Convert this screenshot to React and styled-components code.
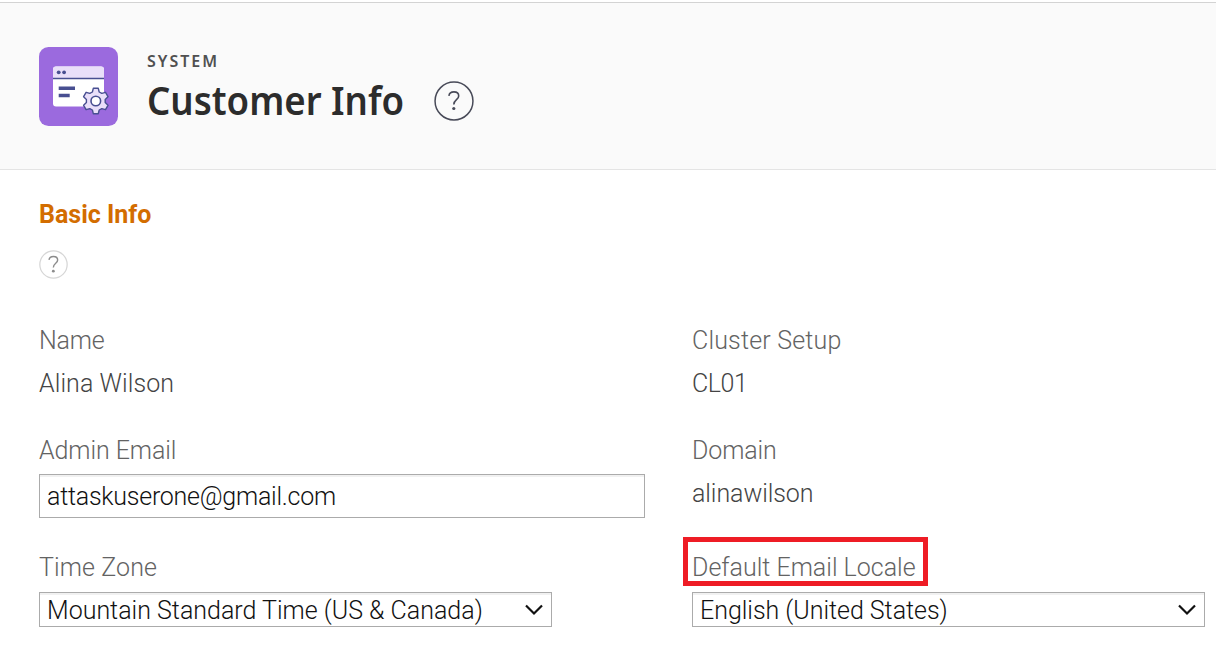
import React from "react";
import styled, { createGlobalStyle } from "styled-components";

const GlobalStyle = createGlobalStyle`
  *, *::before, *::after { box-sizing: border-box; }
  body {
    margin: 0;
    background: #ffffff;
    font-family: Roboto, "Liberation Sans", sans-serif;
    font-size: 25px;
    line-height: 30px;
    color: #484848;
  }
`;

const Page = styled.div`
  width: 100%;
  height: 647px;
  padding-top: 2px;
  overflow: hidden;
`;

const Header = styled.header`
  height: 168px;
  padding: 44px 39px 0;
  display: flex;
  background: #fafafa;
  border-top: 1px solid #d3d3d3;
  border-bottom: 1px solid #e4e4e4;
`;

const AppIcon = styled.svg`
  width: 79px;
  height: 79px;
  flex: none;
`;

const Heading = styled.div`
  margin-left: 29px;
  font-family: "Noto Sans", "Open Sans", sans-serif;
`;

const Eyebrow = styled.div`
  height: 20px;
  margin-top: 4px;
  font-size: 16px;
  line-height: 20px;
  font-weight: 600;
  letter-spacing: 2px;
  color: #505050;
`;

const TitleRow = styled.div`
  height: 56px;
  margin-top: 1px;
  display: flex;
  align-items: center;
  gap: 31px;
`;

const Title = styled.h1`
  margin: 0;
  width: 256px;
  white-space: nowrap;
  font-size: 39px;
  line-height: 56px;
  font-weight: 600;
  transform: scaleX(0.938);
  transform-origin: left center;
  color: #2c2c2c;
`;

const HelpIcon = styled.svg`
  display: block;
  width: ${(p) => p.$size}px;
  height: ${(p) => p.$size}px;
  margin-top: ${(p) => p.$top || 0}px;
`;

const Content = styled.main`
  padding: 29px 11px 0 39px;
`;

const SectionTitle = styled.h2`
  margin: 0 0 20px;
  padding-top: 1px;
  font-size: 25px;
  line-height: 30px;
  font-weight: 700;
  color: #d36d00;
`;

const Form = styled.div`
  margin-top: 47px;
  display: grid;
  grid-template-columns: 606px 513px;
  column-gap: 47px;
  grid-template-rows: 110px 117px 76px;
`;

const Field = styled.div`
  display: flex;
  flex-direction: column;
  align-items: flex-start;
`;

const Text = styled.span`
  white-space: nowrap;
  font-weight: 350;
  letter-spacing: ${(p) => p.$spacing || 0}px;
`;

const Label = styled(Text)`
  color: #636363;
`;

const Value = styled(Text)`
  margin-top: 13px;
  color: #444444;
`;

const Control = styled.div`
  width: ${(p) => p.$width}px;
  height: ${(p) => p.$height}px;
  margin-top: ${(p) => p.$top}px;
  padding: 2px 7px 0;
  display: flex;
  align-items: center;
  justify-content: space-between;
  border: 1px solid #ababab;
  background: #ffffff;
  box-shadow: inset 0 2px 0 #f1f1f1;
  color: #111111;
`;

const Highlight = styled.div`
  width: 245px;
  height: 49px;
  margin: -16px 0 -3px -9px;
  padding: 11px 0 0 4px;
  border: 5px solid #ee1c25;
`;

const Arrow = styled.svg`
  width: 20px;
  height: 14px;
  margin-bottom: 2px;
  flex: none;
`;

function Help({ size, top, stroke, mark, width, scale = 1 }) {
  return (
    <HelpIcon $size={size} $top={top} viewBox="0 0 40 40" fill="none" role="img" aria-label="Help">
      <circle cx="20" cy="20" r={20 - width / 2 - 0.3} stroke={stroke} strokeWidth={width} />
      <g transform={`translate(20 20) scale(${scale}) translate(-20 -20)`}>
        <path d="M14.9 14.8C15.3 12.3 17.2 10.9 19.9 10.9C22.8 10.9 24.7 12.6 24.7 15C24.7 18.8 19.8 18.5 19.8 23.5" stroke={mark} strokeWidth="1.6" />
        <circle cx="19.8" cy="27.5" r="1.6" fill={mark} />
      </g>
    </HelpIcon>
  );
}

function Chevron() {
  return (
    <Arrow viewBox="0 0 20 14" fill="none">
      <path d="M2 2.5L10 10.5L18 2.5" stroke="#111" strokeWidth="2.2" />
    </Arrow>
  );
}

export default function App() {
  return (
    <Page>
      <GlobalStyle />
      <Header>
        <AppIcon viewBox="0 0 79 79" fill="none">
          <rect width="79" height="79" rx="9.5" fill="#9b6ade" />
          <rect x="14" y="19.5" width="51" height="40" rx="3" fill="#fff" />
          <path d="M14 31.5V22.5a3 3 0 0 1 3-3H62a3 3 0 0 1 3 3V31.5Z" fill="#e9dff9" />
          <path d="M14 31.5H65" stroke="#484f91" strokeWidth="1.4" />
          <circle cx="19.7" cy="25.3" r="1.9" fill="#484f91" />
          <circle cx="25.1" cy="25.3" r="1.9" fill="#484f91" />
          <path d="M19.7 41.3H36M19.7 48.5H30.7" stroke="#484f91" strokeWidth="3.6" />
          <path
            transform="translate(56.8 54)"
            d="M-2.5-12.7H2.5L3.4-9L6-7.6L9.7-8.7L12.2-4.3L9.4-1.6V1.6L12.2 4.3L9.7 8.7L6 7.6L3.4 9L2.5 12.7H-2.5L-3.4 9L-6 7.6L-9.7 8.7L-12.2 4.3L-9.4 1.6V-1.6L-12.2-4.3L-9.7-8.7L-6-7.6L-3.4-9Z"
            fill="#e9dff9"
            stroke="#484f91"
            strokeWidth="1.4"
            strokeLinejoin="round"
          />
          <circle cx="56.8" cy="54" r="4.8" fill="#fff" stroke="#484f91" strokeWidth="1.6" />
        </AppIcon>
        <Heading>
          <Eyebrow>SYSTEM</Eyebrow>
          <TitleRow>
            <Title>Customer Info</Title>
            <Help size={40} top={1} stroke="#484a58" mark="#484a58" width={1.5} />
          </TitleRow>
        </Heading>
      </Header>
      <Content>
        <SectionTitle>Basic Info</SectionTitle>
        <Help size={29} stroke="#d6d6d6" mark="#8c8c8c" width={1.7} scale={1.22} />
        <Form>
          <Field>
            <Label $spacing={-0.2}>Name</Label>
            <Value $spacing={0.08}>Alina Wilson</Value>
          </Field>
          <Field>
            <Label $spacing={0.18}>Cluster Setup</Label>
            <Value $spacing={-0.4}>CL01</Value>
          </Field>
          <Field>
            <Label $spacing={-0.08}>Admin Email</Label>
            <Control $width={606} $height={44} $top={8}>
              <Text $spacing={-0.25}>attaskuserone@gmail.com</Text>
            </Control>
          </Field>
          <Field>
            <Label $spacing={-0.1}>Domain</Label>
            <Value $spacing={-0.08}>alinawilson</Value>
          </Field>
          <Field>
            <Label $spacing={0.1}>Time Zone</Label>
            <Control $width={513} $height={35} $top={9}>
              <Text>Mountain Standard Time (US &amp; Canada)</Text>
              <Chevron />
            </Control>
          </Field>
          <Field>
            <Highlight>
              <Label>Default Email Locale</Label>
            </Highlight>
            <Control $width={513} $height={35} $top={9}>
              <Text $spacing={-0.03}>English (United States)</Text>
              <Chevron />
            </Control>
          </Field>
        </Form>
      </Content>
    </Page>
  );
}
